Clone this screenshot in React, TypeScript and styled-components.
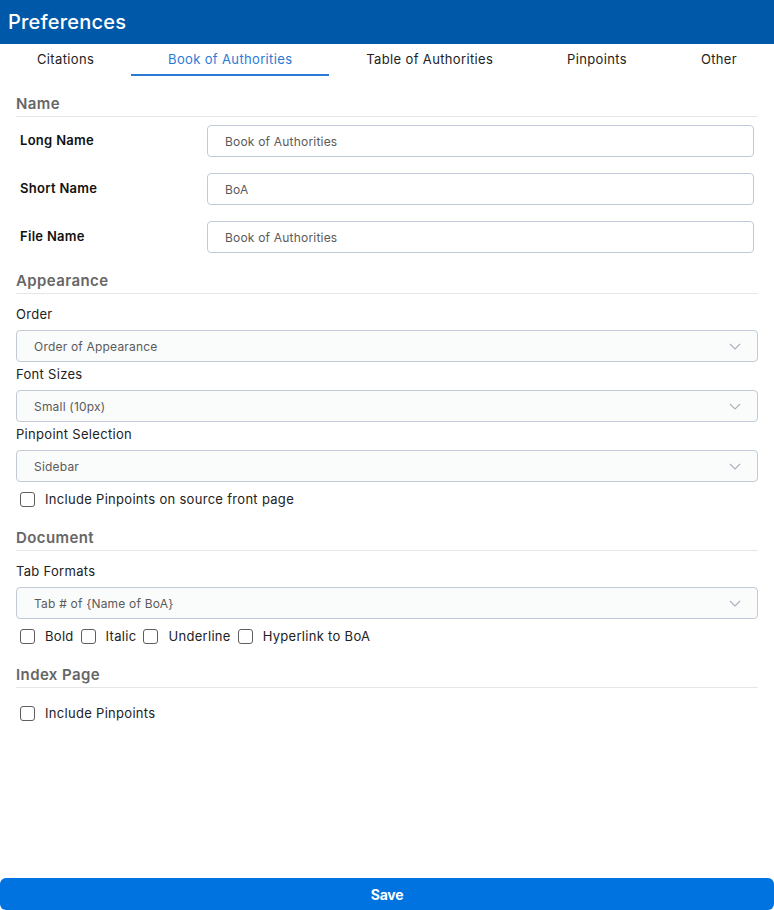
import React from "react";
import styled, { createGlobalStyle } from "styled-components";

const GlobalStyle = createGlobalStyle`
  html, body { margin: 0; padding: 0; background: #ffffff; }
  body { font-family: Inter, "Noto Sans", Roboto, sans-serif; }
  * { box-sizing: border-box; }
`;

const Page = styled.div`
  min-height: 100vh;
  display: flex;
  flex-direction: column;
`;

const Header = styled.header`
  height: 44px;
  background: #0059a8;
  color: #ffffff;
  display: flex;
  align-items: center;
  padding: 0 8px;
  font-size: 20px;
  font-weight: 500;
  letter-spacing: 0.2px;
`;

const TabBar = styled.nav`
  display: flex;
  height: 32px;
`;

const Tab = styled.div<{ $active?: boolean }>`
  flex: 1 1 auto;
  display: flex;
  align-items: center;
  justify-content: center;
  font-size: 13px;
  letter-spacing: 0.35px;
  color: ${(p) => (p.$active ? "#2b7bd6" : "#222222")};
  border-bottom: 2px solid ${(p) => (p.$active ? "#2b7bd6" : "transparent")};
  white-space: nowrap;
`;

const Content = styled.main`
  flex: 1;
  padding: 0 16px;
  display: flex;
  flex-direction: column;
`;

const SectionTitle = styled.h2`
  margin: 17px 0 0;
  font-size: 15px;
  line-height: 20px;
  font-weight: 600;
  letter-spacing: 0.4px;
  color: #666666;
  padding: 1px 0 2px;
  border-bottom: 1px solid #e6e6e6;
`;

const SectionBody = styled.div`
  padding-top: 8px;
  display: flex;
  flex-direction: column;
`;

const NameRows = styled.div`
  display: flex;
  flex-direction: column;
  gap: 16px;
`;

const NameRow = styled.div`
  display: grid;
  grid-template-columns: 187px 1fr;
  align-items: center;
  padding: 0 4px;
`;

const RowLabel = styled.label`
  font-size: 13px;
  font-weight: 600;
  letter-spacing: 0.3px;
  color: #111111;
  padding-bottom: 3px;
`;

const TextInput = styled.div`
  height: 32px;
  border: 1px solid #c2cad8;
  border-radius: 4px;
  background: #ffffff;
  display: flex;
  align-items: center;
  padding-left: 17px;
  font-size: 12px;
  letter-spacing: 0.2px;
  color: #5a5a5a;
`;

const FieldLabel = styled.div`
  margin-top: 2px;
  font-size: 13px;
  line-height: 20px;
  letter-spacing: 0.3px;
  color: #222222;
  margin-bottom: 6px;
`;

const Select = styled.div`
  height: 32px;
  border: 1px solid #c2cad8;
  border-radius: 4px;
  background: #fafcfc;
  display: flex;
  align-items: center;
  justify-content: space-between;
  padding: 0 16px 0 17px;
  font-size: 12px;
  letter-spacing: 0.2px;
  color: #5a5a5a;
`;

const CheckRow = styled.div`
  margin-top: 7px;
  margin-bottom: 1px;
  height: 20px;
  display: flex;
  align-items: center;
  padding-left: 4px;
  gap: 7px;
`;

const CheckItem = styled.label`
  display: flex;
  align-items: center;
  gap: 10px;
  font-size: 13px;
  letter-spacing: 0.3px;
  color: #222222;
`;

const Box = styled.span`
  width: 15px;
  height: 15px;
  border: 1px solid #5f5f5f;
  border-radius: 3px;
  background: #ffffff;
  display: inline-block;
`;

const SaveButton = styled.button`
  height: 32px;
  width: 100%;
  border: none;
  border-radius: 6px;
  background: #0073e1;
  color: #ffffff;
  font-family: Inter, "Noto Sans", sans-serif;
  font-size: 14px;
  font-weight: 700;
  letter-spacing: -0.3px;
  cursor: pointer;
`;

const Chevron = () => (
  <svg width="12" height="7" viewBox="0 0 12 7" fill="none">
    <path d="M1 1l5 5 5-5" stroke="#a9b0bb" strokeWidth="1.1" />
  </svg>
);

const Check = ({ label }: { label: string }) => (
  <CheckItem>
    <Box />
    {label}
  </CheckItem>
);

const tabs = [
  "Citations",
  "Book of Authorities",
  "Table of Authorities",
  "Pinpoints",
  "Other",
];

export default function App() {
  return (
    <Page>
      <GlobalStyle />
      <Header>Preferences</Header>
      <TabBar>
        {tabs.map((t) => (
          <Tab key={t} $active={t === "Book of Authorities"}>
            {t}
          </Tab>
        ))}
      </TabBar>
      <Content>
        <SectionTitle>Name</SectionTitle>
        <SectionBody>
          <NameRows>
            <NameRow>
              <RowLabel>Long Name</RowLabel>
              <TextInput>Book of Authorities</TextInput>
            </NameRow>
            <NameRow>
              <RowLabel>Short Name</RowLabel>
              <TextInput>BoA</TextInput>
            </NameRow>
            <NameRow>
              <RowLabel>File Name</RowLabel>
              <TextInput>Book of Authorities</TextInput>
            </NameRow>
          </NameRows>
        </SectionBody>

        <SectionTitle>Appearance</SectionTitle>
        <SectionBody>
          <FieldLabel>Order</FieldLabel>
          <Select>
            Order of Appearance
            <Chevron />
          </Select>
          <FieldLabel>Font Sizes</FieldLabel>
          <Select>
            Small (10px)
            <Chevron />
          </Select>
          <FieldLabel>Pinpoint Selection</FieldLabel>
          <Select>
            Sidebar
            <Chevron />
          </Select>
          <CheckRow>
            <Check label="Include Pinpoints on source front page" />
          </CheckRow>
        </SectionBody>

        <SectionTitle>Document</SectionTitle>
        <SectionBody>
          <FieldLabel>Tab Formats</FieldLabel>
          <Select>
            Tab # of {"{Name of BoA}"}
            <Chevron />
          </Select>
          <CheckRow>
            <Check label="Bold" />
            <Check label="Italic" />
            <Check label="Underline" />
            <Check label="Hyperlink to BoA" />
          </CheckRow>
        </SectionBody>

        <SectionTitle>Index Page</SectionTitle>
        <SectionBody>
          <CheckRow>
            <Check label="Include Pinpoints" />
          </CheckRow>
        </SectionBody>
      </Content>
      <SaveButton>Save</SaveButton>
    </Page>
  );
}
